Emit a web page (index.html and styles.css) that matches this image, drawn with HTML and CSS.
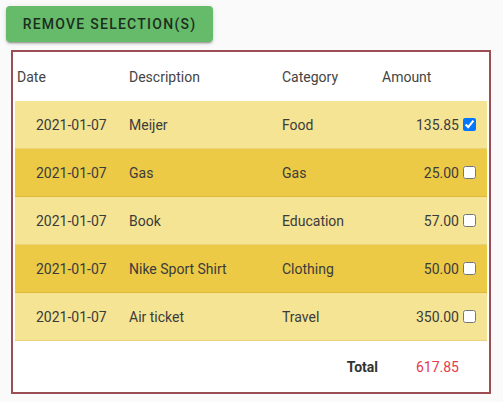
FILE: index.html
```html
<!DOCTYPE html>
<html>
<head>
<meta charset="utf-8">
<link rel="stylesheet" href="styles.css">
</head>
<body>
<button class="btn">REMOVE SELECTION(S)</button>
<div class="card">
  <div class="row head">
    <div class="c date">Date</div>
    <div class="c desc">Description</div>
    <div class="c cat">Category</div>
    <div class="c amt-h">Amount</div>
  </div>
  <div class="row light">
    <div class="c date">2021-01-07</div>
    <div class="c desc">Meijer</div>
    <div class="c cat">Food</div>
    <div class="c amt">135.85<input type="checkbox" checked></div>
  </div>
  <div class="row dark">
    <div class="c date">2021-01-07</div>
    <div class="c desc">Gas</div>
    <div class="c cat">Gas</div>
    <div class="c amt">25.00<input type="checkbox"></div>
  </div>
  <div class="row light">
    <div class="c date">2021-01-07</div>
    <div class="c desc">Book</div>
    <div class="c cat">Education</div>
    <div class="c amt">57.00<input type="checkbox"></div>
  </div>
  <div class="row dark">
    <div class="c date">2021-01-07</div>
    <div class="c desc">Nike Sport Shirt</div>
    <div class="c cat">Clothing</div>
    <div class="c amt">50.00<input type="checkbox"></div>
  </div>
  <div class="row light">
    <div class="c date">2021-01-07</div>
    <div class="c desc">Air ticket</div>
    <div class="c cat">Travel</div>
    <div class="c amt">350.00<input type="checkbox"></div>
  </div>
  <div class="row total">
    <div class="c"></div>
    <div class="c"></div>
    <div class="c total-label">Total</div>
    <div class="c total-val">617.85</div>
  </div>
</div>
</body>
</html>
```
FILE: styles.css
```css
html, body {
  margin: 0;
  padding: 0;
  background: #fafafa;
}
body {
  padding: 6px;
  font-family: Roboto, "Liberation Sans", sans-serif;
  font-size: 14px;
  color: #3b3b3b;
}
.btn {
  display: block;
  width: 207px;
  height: 36px;
  padding: 0 16px;
  border: none;
  border-radius: 4px;
  background: #66bb6a;
  color: #1c2e1d;
  font-family: Roboto, "Liberation Sans", sans-serif;
  font-size: 14px;
  font-weight: 500;
  letter-spacing: 1.25px;
  box-shadow: 0 3px 1px -2px rgba(0,0,0,.2), 0 2px 2px 0 rgba(0,0,0,.14), 0 1px 5px 0 rgba(0,0,0,.12);
}
.card {
  margin: 8px 0 0 5px;
  box-sizing: content-box;
  border: 2px solid #9b4f54;
  background: #fff;
  padding: 0 2px;
  width: 472px;
}
.row {
  display: grid;
  grid-template-columns: 114px 153px 100px 105px;
  align-items: center;
  height: 48px;
}
.row.head {
  height: 49px;
  color: #444;
}
.row.light {
  background: #f5e494;
  border-bottom: 1px solid #e8d37a;
  height: 47px;
}
.row.dark {
  background: #ecca46;
  border-bottom: 1px solid #dcba3c;
  height: 47px;
}
.row.total {
  height: 51px;
}
.head .date { padding-left: 2px; }
.date { padding-left: 21px; }
.amt {
  text-align: right;
  padding-right: 8px;
  display: flex;
  justify-content: flex-end;
  align-items: center;
}
.amt input {
  margin: 0 3px 0 4px;
  width: 13px;
  height: 13px;
}
.total-label {
  font-weight: 700;
  text-align: right;
  padding-right: 4px;
  color: #333;
}
.total-val {
  text-align: right;
  padding-right: 28px;
  color: #e53a4c;
}
```
